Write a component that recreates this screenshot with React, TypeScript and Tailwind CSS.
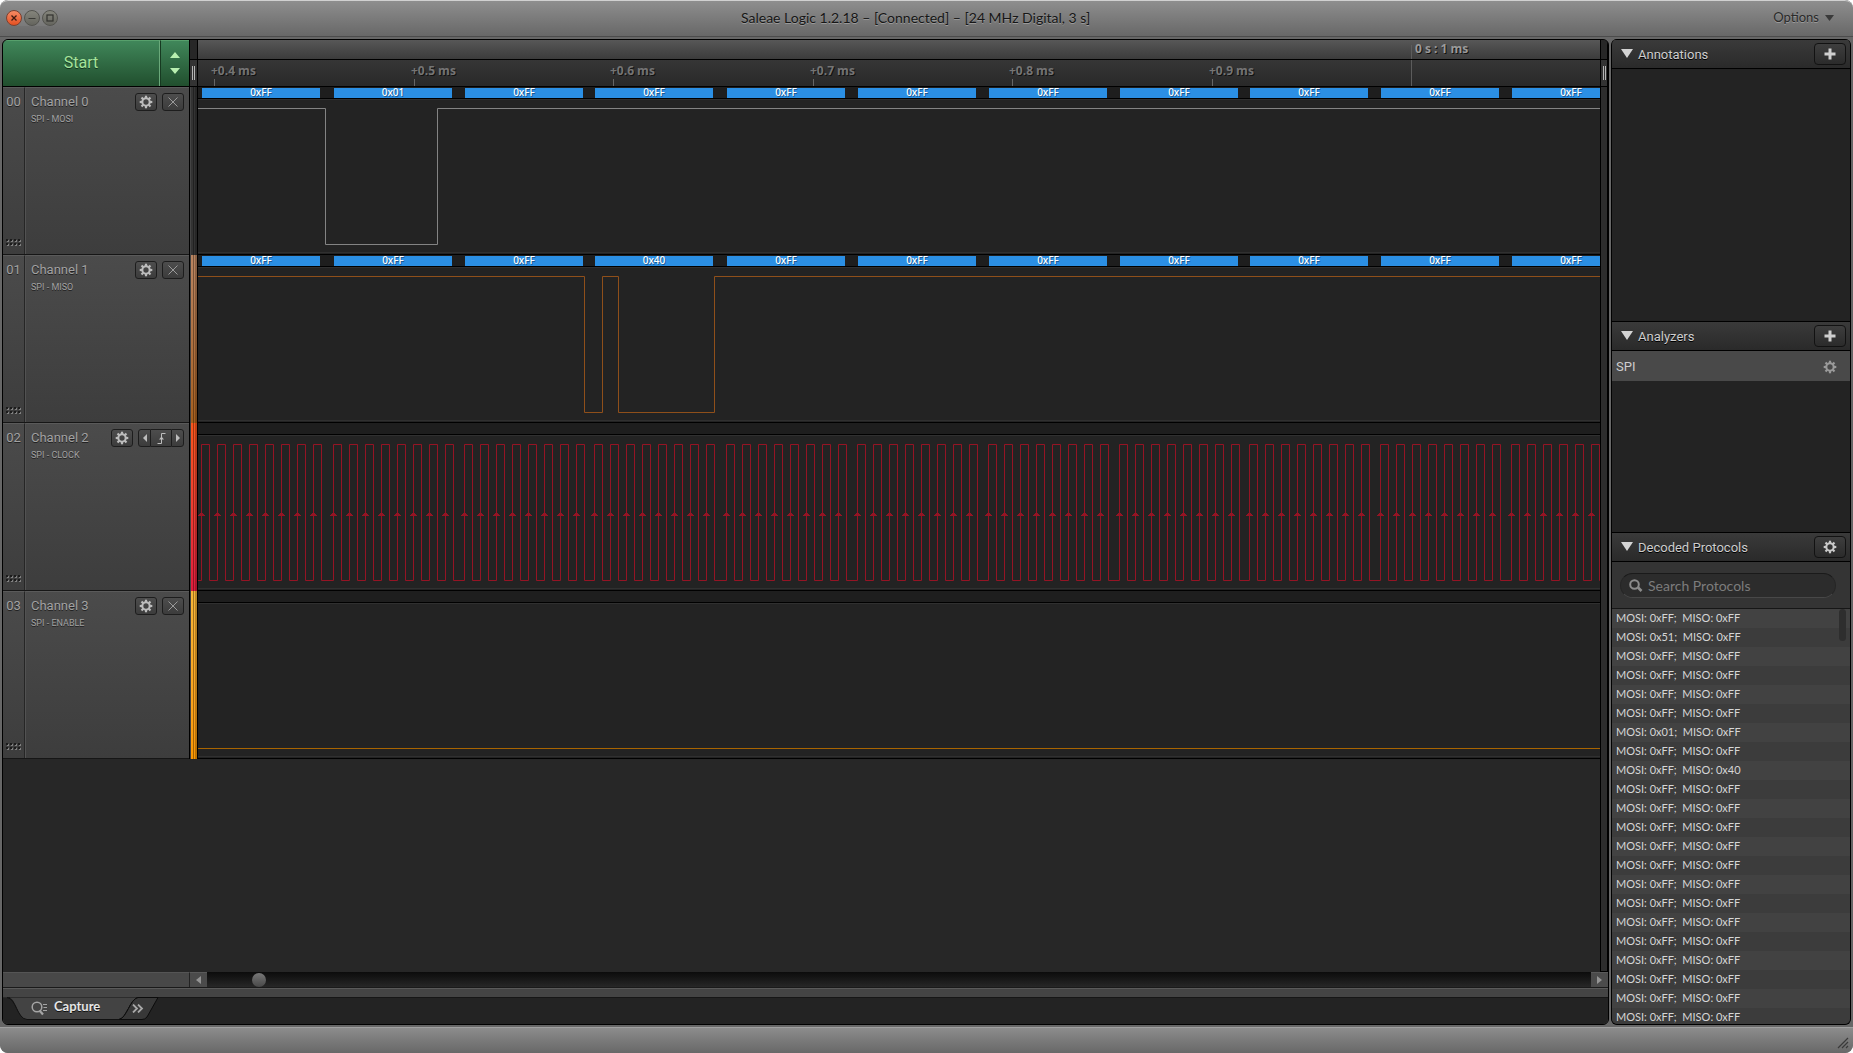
import type { ReactNode } from 'react';
import clsx from 'clsx';

// Positions on the timeline, in pixels from its left edge
const TICKS = [
  { x: 16, label: '+0.4 ms' },
  { x: 216, label: '+0.5 ms' },
  { x: 415, label: '+0.6 ms' },
  { x: 615, label: '+0.7 ms' },
  { x: 814, label: '+0.8 ms' },
  { x: 1014, label: '+0.9 ms' },
];
const MAJOR_TICK = 1213;
const BYTES = [4, 136, 267, 397, 529, 660, 791, 922, 1052, 1183, 1314];
const BYTE_WIDTH = 118;

const HIGH = 21;
const LOW = 157;

const CHANNELS = [
  {
    id: '00',
    name: 'Channel 0',
    role: 'SPI - MOSI',
    strip: 'bg-[#333333]',
    stroke: '#838383',
    values: ['0xFF', '0x01', '0xFF', '0xFF', '0xFF', '0xFF', '0xFF', '0xFF', '0xFF', '0xFF', '0xFF'],
    startsHigh: true,
    edges: [127, 239],
  },
  {
    id: '01',
    name: 'Channel 1',
    role: 'SPI - MISO',
    strip: 'bg-linear-to-b from-[#b98460] to-[#a65f1c]',
    stroke: '#8f4f1a',
    values: ['0xFF', '0xFF', '0xFF', '0x40', '0xFF', '0xFF', '0xFF', '0xFF', '0xFF', '0xFF', '0xFF'],
    startsHigh: true,
    edges: [386, 404, 420, 516],
  },
  {
    id: '02',
    name: 'Channel 2',
    role: 'SPI - CLOCK',
    strip: 'bg-linear-to-b from-[#f9561b] to-[#e01a3c]',
    stroke: '#951424',
    values: [],
    startsHigh: false,
    edges: BYTES.flatMap((x) => Array.from({ length: 16 }, (_, i) => x - 1 + i * 8)),
    clock: true,
  },
  {
    id: '03',
    name: 'Channel 3',
    role: 'SPI - ENABLE',
    strip: 'bg-linear-to-b from-[#f7b537] to-[#fb9700]',
    stroke: '#a86400',
    values: [],
    startsHigh: false,
    edges: [],
  },
];

type Channel = (typeof CHANNELS)[number];

const FRAMES = Array.from({ length: 22 }, (_, i) => ({
  mosi: i === 1 ? '0x51' : i === 6 ? '0x01' : '0xFF',
  miso: i === 8 ? '0x40' : '0xFF',
}));

function wavePath(startsHigh: boolean, edges: number[]) {
  let high = startsHigh;
  let d = `M0 ${(high ? HIGH : LOW) + 0.5}`;
  for (const x of edges) {
    high = !high;
    d += `H${x + 0.5}V${(high ? HIGH : LOW) + 0.5}`;
  }
  return d + 'H4000';
}

function Gear({ className }: { className?: string }) {
  return (
    <svg viewBox="0 0 14 14" className={clsx('size-3.5', className)} aria-hidden="true">
      <circle cx="7" cy="7" r="3.7" fill="none" stroke="currentColor" strokeWidth="2.1" />
      {[0, 45, 90, 135, 180, 225, 270, 315].map((a) => (
        <rect key={a} x="5.9" y="0.7" width="2.2" height="2.3" fill="currentColor" transform={`rotate(${a} 7 7)`} />
      ))}
    </svg>
  );
}

function Plus() {
  return (
    <svg viewBox="0 0 12 12" className="size-3" aria-hidden="true">
      <path d="M4.5 0.5h3v4h4v3h-4v4h-3v-4h-4v-3h4z" fill="#cfcfcf" />
    </svg>
  );
}

function Grip() {
  return (
    <svg viewBox="0 0 15 7" className="h-[7px] w-[15px]" aria-hidden="true">
      {[0, 4].map((y) =>
        [0, 4, 8, 12].map((x) => (
          <g key={`${x}-${y}`}>
            <rect x={x + 1} y={y + 1} width="2" height="2" fill="#808080" />
            <rect x={x} y={y} width="2" height="2" fill="#1c1c1c" />
          </g>
        )),
      )}
    </svg>
  );
}

function TitleBar() {
  return (
    <header className="flex h-[37px] shrink-0 items-center rounded-t-lg border-t border-[#d0d0d0] border-b border-b-[#4c4c4c] bg-linear-to-b from-[#8e8e8e] to-[#686868] pb-px">
      <div className="ml-1.5 flex gap-0.5 rounded-full bg-white/5">
        <button aria-label="Close" className="grid size-4 place-items-center rounded-full border border-[#7a4030] bg-linear-to-b from-[#f58a63] to-[#e5501f]">
          <svg viewBox="0 0 6 6" className="size-1.5">
            <path d="M0.5 0.5L5.5 5.5M5.5 0.5L0.5 5.5" stroke="#3c1a10" strokeWidth="1.3" />
          </svg>
        </button>
        <button aria-label="Minimize" className="grid size-4 place-items-center rounded-full border border-[#53534e] bg-linear-to-b from-[#85857c] to-[#65655e]">
          <svg viewBox="0 0 8 8" className="size-2">
            <path d="M0.5 4.5H7.5" stroke="#3a3a36" />
          </svg>
        </button>
        <button aria-label="Maximize" className="grid size-4 place-items-center rounded-full border border-[#53534e] bg-linear-to-b from-[#85857c] to-[#65655e]">
          <svg viewBox="0 0 8 8" className="size-2">
            <rect x="1" y="1" width="6" height="6" fill="none" stroke="#33332f" strokeWidth="1.2" />
          </svg>
        </button>
      </div>
      <h1 className="flex-1 pb-0.5 text-center text-[14px] text-[#161616] [text-shadow:0_1px_0_#9a9a9a]">
        Saleae Logic 1.2.18 – [Connected] – [24 MHz Digital, 3 s]
      </h1>
      <button className="mr-[19px] flex items-center gap-1.5 text-[13px] text-[#2a2a2a] [text-shadow:0_1px_0_#9a9a9a]">
        Options
        <svg viewBox="0 0 9 6" className="h-1.5 w-[9px]">
          <path d="M0 0H9L4.5 6Z" fill="#3a3a3a" />
        </svg>
      </button>
    </header>
  );
}

function GutterHandle({ className }: { className: string }) {
  return (
    <div className={clsx('flex h-full shrink-0 flex-col border-x border-black', className)}>
      <div className="h-5 border-b border-black bg-[#272727]" />
      <div className="flex flex-1 items-center justify-center gap-px border-b border-black bg-[#333333]">
        <span className="h-3.5 w-px bg-[#b4b4b4]" />
        <span className="h-3.5 w-px bg-[#b4b4b4]" />
      </div>
    </div>
  );
}

function Ruler() {
  return (
    <div className="flex min-w-0 flex-1 flex-col overflow-hidden font-['Open_Sans',sans-serif] text-[12px] leading-4 font-bold whitespace-nowrap text-[#757575] [text-shadow:1px_1px_0_#111]">
      <div className="h-5 shrink-0 border-b border-black bg-linear-to-b from-[#575757] to-[#3c3c3c]">
        <div className="flex pt-px" style={{ paddingLeft: MAJOR_TICK }}>
          <span className="mt-1 h-3.5 w-px bg-[#5c5c5c]" />
          <span className="pl-[3px] text-[#9a9a9a]">0 s : 1 ms</span>
        </div>
      </div>
      <div className="flex flex-1 items-stretch border-b border-black bg-linear-to-b from-[#363636] to-[#292929]">
        <div className="shrink-0" style={{ width: TICKS[0].x }} />
        {TICKS.map((tick, i) => (
          <div
            key={tick.label}
            className="flex shrink-0 flex-col"
            style={{ width: (TICKS[i + 1]?.x ?? MAJOR_TICK) - tick.x }}
          >
            <span className="-ml-[3px] pt-[3px]">{tick.label}</span>
            <span className="w-px flex-1 bg-[#666666]" />
          </div>
        ))}
        <span className="w-px shrink-0 bg-[#5c5c5c]" />
      </div>
    </div>
  );
}

const smallButton =
  'grid h-[18px] place-items-center border-[#1d1d1d] bg-linear-to-b from-[#4d4d4d] to-[#3c3c3c] text-[#bdbdbd]';

function ChannelRow({ channel }: { channel: Channel }) {
  return (
    <section className="flex h-[168px] shrink-0">
      <div className="flex w-[186px] shrink-0 border-b border-[#161616] bg-linear-to-b from-[#4b4b4b] to-[#3d3d3d] font-['Roboto',sans-serif] text-[#a2a2a2] [text-shadow:0_1px_0_#222]">
        <div className="flex w-[22px] flex-col items-center justify-between border-t border-r border-t-[#5a5a5a] border-r-[#262626] pt-1.5 pb-2 text-[13px] leading-4">
          {channel.id}
          <Grip />
        </div>
        <div className="flex flex-1 items-start border-t border-l border-t-[#5a5a5a] border-l-[#525252] pt-[5px] pr-[5px] pl-[5px]">
          <div className="flex-1 pt-px whitespace-nowrap">
            <h2 className="text-[13px] leading-4">{channel.name}</h2>
            <p className="text-[9px] leading-[18px]">{channel.role}</p>
          </div>
          <div className="flex gap-[5px]">
            <button aria-label={`${channel.name} settings`} className={clsx(smallButton, 'w-[22px] rounded-[3px] border')}>
              <Gear />
            </button>
            {channel.clock ? (
              <div className="flex">
                <button aria-label="Previous edge" className={clsx(smallButton, 'w-[13px] rounded-l-[3px] border')}>
                  <svg viewBox="0 0 4 8" className="h-2 w-1"><path d="M4 0V8L0 4Z" fill="currentColor" /></svg>
                </button>
                <button aria-label="Trigger on rising edge" className={clsx(smallButton, 'w-5 border-y')}>
                  <svg viewBox="0 0 9 11" className="h-[11px] w-[9px]">
                    <path d="M0.5 10.5H4.5V0.5H8.5" fill="none" stroke="currentColor" />
                    <path d="M2 6.5L4.5 3.5L7 6.5Z" fill="currentColor" />
                  </svg>
                </button>
                <button aria-label="Next edge" className={clsx(smallButton, 'w-[13px] rounded-r-[3px] border')}>
                  <svg viewBox="0 0 4 8" className="h-2 w-1"><path d="M0 0V8L4 4Z" fill="currentColor" /></svg>
                </button>
              </div>
            ) : (
              <button aria-label={`Clear ${channel.name} trigger`} className={clsx(smallButton, 'w-[22px] rounded-[3px] border')}>
                <svg viewBox="0 0 10 10" className="size-2.5">
                  <path d="M0.5 0.5L9.5 9.5M9.5 0.5L0.5 9.5" stroke="#9a9a9a" />
                </svg>
              </button>
            )}
          </div>
        </div>
      </div>
      <div className="flex w-[9px] shrink-0 border-x border-black bg-[#444444] pl-px">
        <div className={clsx('flex flex-1', channel.strip)}>
          <span className="ml-0.5 w-px bg-black/35" />
          <span className="ml-px w-0.5 bg-black/25" />
        </div>
      </div>
      <div className="relative min-w-0 flex-1 overflow-x-clip border-b border-black bg-[#232323]">
        <div className="flex h-3 border-b border-black bg-[#1e1e1e] pt-px">
          {channel.values.map((value, i) => (
            <span
              key={i}
              className="h-2.5 shrink-0 bg-[#2b8fe4] text-center font-['Noto_Sans',sans-serif] text-[10px] leading-2 font-medium text-white [text-shadow:1px_1px_0_#1c5c94]"
              style={{ width: BYTE_WIDTH, marginLeft: i === 0 ? BYTES[0] : BYTES[i] - BYTES[i - 1] - BYTE_WIDTH }}
            >
              {value}
            </span>
          ))}
        </div>
        <div className="h-[154px] border-y border-[#303030]" />
        <svg className="absolute inset-0 size-full" aria-hidden="true">
          <path d={wavePath(channel.startsHigh, channel.edges)} fill="none" stroke={channel.stroke} />
          {channel.clock &&
            channel.edges
              .filter((_, i) => i % 2 === 0)
              .map((x) => <path key={x} d={`M${x - 3} 93h7v-1h-1v-1h-1v-1h-3v1h-1v1h-1z`} fill={channel.stroke} />)}
        </svg>
      </div>
      <div className="w-2 shrink-0 border-x border-black bg-[#2d2d2d]" />
    </section>
  );
}

function ScrollRow() {
  return (
    <div className="flex h-4 shrink-0 border-b border-[#1a1a1a] bg-[#484848]">
      <div className="w-[187px] shrink-0 border-t border-r border-t-[#555555] border-r-[#222222]" />
      <button aria-label="Scroll left" className="grid w-[17px] place-items-center border-t border-[#5a5a5a] bg-[#4b4b4b]">
        <svg viewBox="0 0 5 8" className="h-2 w-[5px]"><path d="M5 0V8L0 4Z" fill="#949494" /></svg>
      </button>
      <div className="flex flex-1 items-center bg-linear-to-b from-[#0c0c0c] to-[#272727] pl-[45px]">
        <span className="size-3.5 rounded-full bg-linear-to-b from-[#787878] to-[#484848]" />
      </div>
      <button aria-label="Scroll right" className="grid w-[17px] place-items-center border-t border-[#5a5a5a] bg-[#4b4b4b]">
        <svg viewBox="0 0 5 8" className="h-2 w-[5px]"><path d="M0 0V8L5 4Z" fill="#949494" /></svg>
      </button>
    </div>
  );
}

function TabBar() {
  return (
    <nav className="shrink-0 border-t border-[#5a5a5a] bg-[#444444] pt-2">
      <div className="relative flex h-[27px] items-start border-t border-[#161616] bg-[#232323]">
        <svg viewBox="0 0 160 23" className="absolute -top-px left-0 h-[23px] w-40" aria-hidden="true">
          <path d="M0 0H4C14 0 14 22 24 22.5H116C122 22 126 4 134 0.5H0Z" fill="#434343" />
          <path d="M0 1H4C13 1 14 22 24 22.5H21L0 22Z" fill="#232323" />
          <path d="M4 0.5C13 1 14 22 24 22.5H116C124 21 127 2 135 0.5" fill="none" stroke="#111111" />
          <path d="M116 22.5C124 21 127 2 135 0.5H155L144 20Q142 22.5 139 22.5Z" fill="#383838" stroke="#0c0c0c" />
        </svg>
        <button className="relative ml-7 flex h-[18px] items-center gap-1.5 text-[13px] font-bold text-[#e6e6e6] [text-shadow:0_1px_0_#111]">
          <svg viewBox="0 0 17 15" className="mt-0.5 h-[15px] w-[17px]" aria-hidden="true">
            <circle cx="6" cy="6" r="4.8" fill="none" stroke="#a5a5a5" strokeWidth="1.5" />
            <path d="M8.5 9.5L12 13.5" stroke="#a5a5a5" strokeWidth="2.2" />
            <path d="M12 3.5H16M12.5 6.5H16M12 9.5H16" stroke="#a5a5a5" />
          </svg>
          Capture
        </button>
        <button aria-label="Show more tabs" className="relative ml-8 grid h-5 place-items-center">
          <svg viewBox="0 0 12 9" className="h-[9px] w-3">
            <path d="M1 0.5L5 4.5L1 8.5M6 0.5L10 4.5L6 8.5" fill="none" stroke="#a8a8a8" strokeWidth="1.8" />
          </svg>
        </button>
      </div>
    </nav>
  );
}

function PanelHeader({ title, action, children }: { title: string; action: string; children: ReactNode }) {
  return (
    <div className="flex h-[30px] shrink-0 items-center border-y border-black bg-linear-to-b from-[#3a3a3a] to-[#2a2a2a] pr-1 pl-[9px]">
      <button className="flex flex-1 items-center gap-[5px] pt-0.5 font-['Roboto',sans-serif] text-[13px] text-[#cecece] [text-shadow:0_1px_0_#000]">
        <svg viewBox="0 0 12 9" className="mb-1 h-[9px] w-3">
          <path d="M0 0H12L6 9Z" fill="#d4d4d4" />
        </svg>
        {title}
      </button>
      <button aria-label={action} className="grid h-[22px] w-8 place-items-center rounded border border-[#121212] bg-linear-to-b from-[#3e3e3e] to-[#2b2b2b] text-[#cacaca]">
        {children}
      </button>
    </div>
  );
}

function Sidebar() {
  return (
    <aside className="flex w-60 shrink-0 flex-col overflow-hidden rounded-md border-x border-b border-black bg-[#232323]">
      <section className="flex h-[282px] shrink-0 flex-col">
        <PanelHeader title="Annotations" action="Add annotation">
          <Plus />
        </PanelHeader>
      </section>
      <section className="flex h-[211px] shrink-0 flex-col">
        <PanelHeader title="Analyzers" action="Add analyzer">
          <Plus />
        </PanelHeader>
        <div className="flex h-[30px] items-center justify-between bg-[#494949] pt-0.5 pr-[13px] pl-1 font-['Roboto',sans-serif] text-[13px] text-[#cecece]">
          SPI
          <button aria-label="SPI settings" className="text-[#9a9a9a]">
            <Gear />
          </button>
        </div>
      </section>
      <section className="flex min-h-0 flex-1 flex-col">
        <PanelHeader title="Decoded Protocols" action="Decoded protocols settings">
          <Gear />
        </PanelHeader>
        <div className="flex h-[47px] shrink-0 items-start border-b border-[#161616] bg-[#343434] pt-[11px] pr-3.5 pl-2">
          <label className="flex h-[25px] min-w-0 flex-1 items-center gap-[5px] rounded-full border border-t-[#1a1a1a] border-x-[#262626] border-b-[#484848] bg-[#2c2c2c] px-2">
            <svg viewBox="0 0 14 13" className="h-[13px] w-3.5 shrink-0" aria-hidden="true">
              <circle cx="5.5" cy="5.5" r="4.3" fill="none" stroke="#8c8c8c" strokeWidth="2" />
              <path d="M9 8.5L12.5 12" stroke="#8c8c8c" strokeWidth="2.6" />
            </svg>
            <input
              type="search"
              aria-label="Search Protocols"
              placeholder="Search Protocols"
              className="min-w-0 flex-1 bg-transparent text-[14px] outline-none placeholder:text-[#7c7c7c]"
            />
          </label>
        </div>
        <div className="relative min-h-0 flex-1 overflow-hidden bg-[#3c3c3c]">
          <ul className="text-[11px] leading-[17px] whitespace-pre text-[#d6d6d6]">
            {FRAMES.map((frame, i) => (
              <li key={i} className="h-[19px] pl-1 odd:bg-[#424242]">
                {`MOSI: ${frame.mosi};  MISO: ${frame.miso}`}
              </li>
            ))}
          </ul>
          <span className="absolute top-0 right-1 h-8 w-[7px] rounded-full bg-[#2e2e2e]" />
        </div>
      </section>
    </aside>
  );
}

export default function App() {
  return (
    <div className="h-screen bg-white">
      <div className="flex h-full flex-col overflow-hidden rounded-lg bg-[#676767] font-['Lato',sans-serif]">
        <TitleBar />
        <div className="flex min-h-0 flex-1 gap-0.5 px-0.5 pt-0.5 pb-0.5">
          <main className="flex min-w-0 flex-1 flex-col overflow-hidden rounded-md border border-black bg-[#272727]">
            <div className="flex h-[47px] shrink-0">
              <div className="flex w-[186px] shrink-0 border-b border-black font-['Roboto',sans-serif] text-[#a5e39b]">
                <button className="flex-1 border-t border-r border-t-[#57a06c] border-r-[#6aa97a] bg-linear-to-b from-[#40875a] to-[#214f2e] pb-0.5 text-[16px] [text-shadow:0_1px_0_#14351d]">
                  Start
                </button>
                <button aria-label="Capture options" className="grid w-[29px] place-items-center border-t border-l border-t-[#57a06c] border-l-[#173a21] bg-linear-to-b from-[#40875a] to-[#214f2e] pb-0.5">
                  <svg viewBox="0 0 10 22" className="h-[22px] w-2.5">
                    <path d="M0 6L5 0L10 6ZM0 16H10L5 22Z" fill="#b8efb0" />
                  </svg>
                </button>
              </div>
              <GutterHandle className="w-[9px]" />
              <Ruler />
              <GutterHandle className="w-2" />
            </div>
            <div className="flex min-h-0 flex-1 flex-col">
              {CHANNELS.map((channel) => (
                <ChannelRow key={channel.id} channel={channel} />
              ))}
              <div className="flex min-h-0 flex-1 justify-end">
                <div className="w-2 border-x border-b border-black bg-[#2d2d2d]" />
              </div>
            </div>
            <ScrollRow />
            <TabBar />
          </main>
          <Sidebar />
        </div>
        <footer className="flex h-[26px] shrink-0 items-end justify-end rounded-b-lg border-t border-[#a0a0a0] bg-linear-to-b from-[#8c8c8c] to-[#686868] pr-1 pb-1">
          <svg viewBox="0 0 12 12" className="size-3" aria-hidden="true">
            <path d="M1 11L11 1M5 11L11 5M9 11L11 9" stroke="#3a3a3a" strokeWidth="1.2" />
          </svg>
        </footer>
      </div>
    </div>
  );
}
